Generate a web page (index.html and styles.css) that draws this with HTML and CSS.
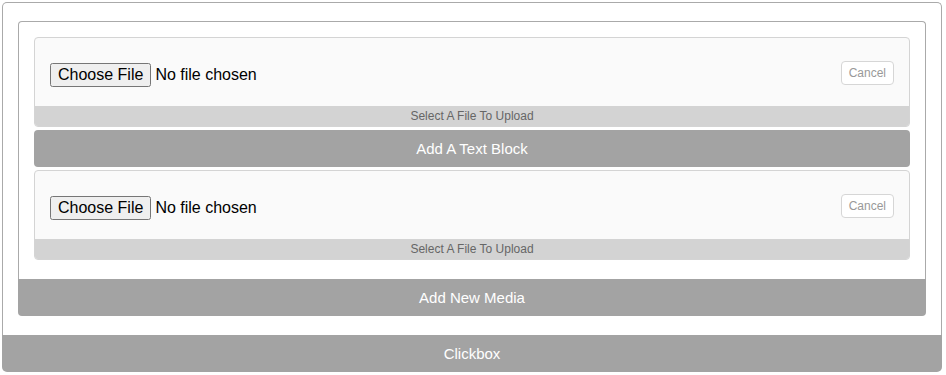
FILE: index.html
```html
<!DOCTYPE html>
<html lang="en">
<head>
  <meta charset="UTF-8">
  <meta name="viewport" content="width=device-width, initial-scale=1.0">
  <title>Clickbox</title>
  <link rel="stylesheet" href="styles.css">
</head>
<body>
  <div class="clickbox">
    <div class="clickbox-body">
      <div class="media">
        <div class="media-body">
          <div class="upload-card">
            <div class="upload-row">
              <input type="file" class="upload-input">
              <button class="btn-cancel">Cancel</button>
            </div>
            <div class="upload-hint">Select A File To Upload</div>
          </div>

          <div class="bar bar-block">Add A Text Block</div>

          <div class="upload-card">
            <div class="upload-row">
              <input type="file" class="upload-input">
              <button class="btn-cancel">Cancel</button>
            </div>
            <div class="upload-hint">Select A File To Upload</div>
          </div>
        </div>
        <div class="bar bar-footer">Add New Media</div>
      </div>
    </div>
    <div class="bar bar-footer bar-outer">Clickbox</div>
  </div>
</body>
</html>
```

FILE: styles.css
```css
* {
  margin: 0;
  padding: 0;
  box-sizing: border-box;
}

body {
  margin: 2px 4px 2px 2px;
  font-family: "Liberation Sans", Arial, sans-serif;
  color: #333;
  background: #fff;
}

.clickbox-body {
  border: 1px solid #aaa;
  border-bottom: none;
  border-radius: 5px 5px 0 0;
  padding: 18px 15px 19px;
}

.media-body {
  border: 1px solid #aaa;
  border-bottom: none;
  border-radius: 4px 4px 0 0;
  padding: 15px 15px 19px;
  display: flex;
  flex-direction: column;
  gap: 3px;
}

.upload-card {
  background: #fafafa;
  border: 1px solid #d4d4d4;
  border-radius: 4px;
  overflow: hidden;
}

.upload-row {
  height: 68px;
  padding: 0 15px;
  display: flex;
  align-items: center;
  justify-content: space-between;
}

.upload-input {
  margin-top: 5px;
  font-family: "Liberation Sans", Arial, sans-serif;
  font-size: 16px;
  color: #000;
}

.btn-cancel {
  margin-top: 2px;
  font-family: "Liberation Sans", Arial, sans-serif;
  font-size: 12px;
  color: #999;
  background: #fff;
  border: 1px solid #d6d6d6;
  border-radius: 4px;
  padding: 4px 7px;
}

.upload-hint {
  background: #d3d3d3;
  height: 20px;
  line-height: 20px;
  font-size: 12px;
  color: #666;
  text-align: center;
}

.bar {
  background: #a3a3a3;
  color: #fff;
  font-size: 15px;
  text-align: center;
}

.bar-block {
  height: 37px;
  line-height: 37px;
  border-radius: 4px;
}

.bar-footer {
  height: 37px;
  line-height: 37px;
  border-radius: 0 0 4px 4px;
}

.bar-outer {
  border-radius: 0 0 5px 5px;
}
```
